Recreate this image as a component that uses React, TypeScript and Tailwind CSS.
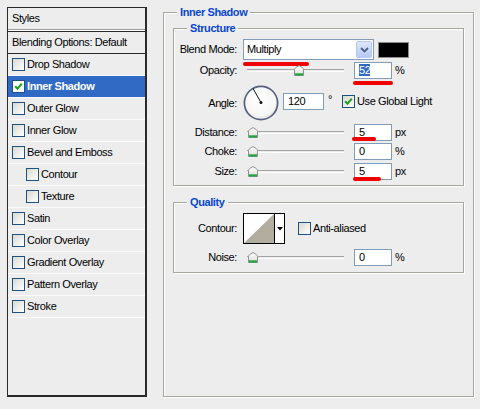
import React from "react";

type Effect = { name: string; sub?: boolean; active?: boolean };

const effects: Effect[] = [
  { name: "Drop Shadow" },
  { name: "Inner Shadow", active: true },
  { name: "Outer Glow" },
  { name: "Inner Glow" },
  { name: "Bevel and Emboss" },
  { name: "Contour", sub: true },
  { name: "Texture", sub: true },
  { name: "Satin" },
  { name: "Color Overlay" },
  { name: "Gradient Overlay" },
  { name: "Pattern Overlay" },
  { name: "Stroke" },
];

const Checkbox = ({ checked = false, white = false }: { checked?: boolean; white?: boolean }) => (
  <span
    className={
      "flex size-[13px] shrink-0 items-center justify-center border border-[#1c5180] " +
      (white ? "bg-white" : "bg-gradient-to-br from-[#d9d9d2] to-white")
    }
  >
    {checked && (
      <svg width="9" height="9" viewBox="0 0 9 9">
        <path d="M1.2 4.2 L3.5 6.7 L7.8 1.6" stroke="#21a121" strokeWidth="2.1" fill="none" />
      </svg>
    )}
  </span>
);

const RedMark = ({ className }: { className: string }) => (
  <span className={"absolute h-[4px] rounded-full bg-[#f00000] " + className} />
);

const Slider = ({ at }: { at: number }) => (
  <div className="relative ml-[10px] flex h-[17px] w-[97px] items-center">
    <div className="h-[3px] w-full border-t border-b border-t-[#a3a3a3] border-b-white" />
    <svg
      className="absolute top-[3px]"
      style={{ left: at }}
      width="10"
      height="11"
      viewBox="0 0 10 11"
    >
      <defs>
        <linearGradient id="thumb" x1="0" y1="0" x2="0" y2="1">
          <stop offset="0" stopColor="#ffffff" />
          <stop offset="1" stopColor="#dcdcd6" />
        </linearGradient>
      </defs>
      <path d="M0.5 4.5 Q0.5 3.5 1.5 2.7 L5 0.5 L8.5 2.7 Q9.5 3.5 9.5 4.5 V10.5 H0.5 Z" fill="url(#thumb)" stroke="#8e9096" />
      <rect x="1" y="8.3" width="8" height="2.2" fill="#21a83a" />
    </svg>
  </div>
);

const Field = ({
  value,
  w = "w-[38px]",
  selected = false,
  children,
}: {
  value: string;
  w?: string;
  selected?: boolean;
  children?: React.ReactNode;
}) => (
  <div className={"relative h-[17px] shrink-0 border border-[#7f9db9] bg-white pl-[4px] leading-[15px] " + w}>
    {selected ? <span className="bg-[#316ac5] text-white">{value}</span> : value}
    {children}
  </div>
);

const Label = ({ children }: { children: React.ReactNode }) => (
  <span className="w-[63px] shrink-0 text-right">{children}</span>
);

const SliderRow = ({
  label,
  at,
  value,
  unit,
  selected,
  mark,
  className,
}: {
  label: string;
  at: number;
  value: string;
  unit: string;
  selected?: boolean;
  mark?: string;
  className: string;
}) => (
  <div className={"flex items-center " + className}>
    <Label>{label}</Label>
    <Slider at={at} />
    <div className="ml-[10px]">
      <Field value={value} selected={selected}>
        {mark && <RedMark className={mark} />}
      </Field>
    </div>
    <span className="ml-[3px]">{unit}</span>
  </div>
);

const legendCls =
  "ml-[13px] bg-[#ededed] px-[3px] text-[11px] font-bold leading-[13px] text-[#0a45cf]";
const boxCls =
  "border border-[#a6a69e] shadow-[1px_1px_0_#ffffff,inset_1px_1px_0_#ffffff]";

export default function App() {
  return (
    <div className="flex h-[409px] w-[480px] items-start bg-[#ededed] font-['Liberation_Sans',Arial,sans-serif] text-[11px] tracking-[-0.4px] text-black">
      {/* styles list */}
      <div className="ml-[7px] mt-[7px] flex h-[390px] w-[140px] flex-col border-t border-l border-r-2 border-b-2 border-[#2a2a2a]">
        <div className="flex h-[22px] shrink-0 items-center border-b border-[#9c9c9c] pl-[4px]">Styles</div>
        <div className="h-px shrink-0 bg-white" />
        <div className="flex h-[23px] shrink-0 items-center border-t border-b border-[#2a2a2a] pl-[4px]">
          Blending Options: Default
        </div>
        {effects.map((e) => (
          <div
            key={e.name}
            className={
              "flex h-[22px] shrink-0 items-center gap-[2px] border-b border-[#fbfbfb] " +
              (e.sub ? "pl-[18px] " : "pl-[4px] ") +
              (e.active ? "bg-[#316ac5] font-bold text-white" : "")
            }
          >
            <Checkbox checked={e.active} white={e.active} />
            <span>{e.name}</span>
          </div>
        ))}
      </div>

      {/* settings */}
      <fieldset className={"ml-[16px] mt-[6px] h-[391px] w-[311px] " + boxCls}>
        <legend className={legendCls}>Inner Shadow</legend>

        <fieldset className={"ml-[9px] mt-[3px] h-[164px] w-[291px] " + boxCls}>
          <legend className={legendCls}>Structure</legend>

          <div className="mt-[4px] flex h-[21px] items-center">
            <Label>Blend Mode:</Label>
            <div className="relative ml-[6px] flex h-[21px] w-[131px] items-center border border-[#7f9db9] bg-white">
              <span className="flex-1 pl-[3px]">Multiply</span>
              <span className="m-px flex h-[17px] w-[16px] items-center justify-center rounded-[2px] border border-[#b6c9f2] bg-gradient-to-b from-[#dde7fd] to-[#b7cbf6]">
                <svg width="9" height="6" viewBox="0 0 9 6">
                  <path d="M1 1 L4.5 4.5 L8 1" stroke="#4d6185" strokeWidth="1.8" fill="none" />
                </svg>
              </span>
              <RedMark className="left-[-1px] top-[22px] w-[66px]" />
            </div>
            <span className="ml-[4px] h-[16px] w-[31px] border border-[#8c8c8c] bg-black" />
          </div>

          <SliderRow
            className="mt-[2px] h-[17px]"
            label="Opacity:"
            at={47}
            value="52"
            unit="%"
            selected
            mark="left-[-2px] top-[18px] w-[40px]"
          />

          <div className="mt-[6px] flex h-[36px] items-center">
            <Label>Angle:</Label>
            <svg className="ml-[6px] shrink-0" width="36" height="36" viewBox="0 0 36 36">
              <defs>
                <radialGradient id="dial" cx="0.45" cy="0.4" r="0.65">
                  <stop offset="0" stopColor="#ffffff" />
                  <stop offset="0.75" stopColor="#f6f6f6" />
                  <stop offset="1" stopColor="#dcdcdc" />
                </radialGradient>
              </defs>
              <circle cx="18" cy="18" r="16.6" fill="url(#dial)" stroke="#53607e" strokeWidth="1.7" />
              <line x1="18" y1="17.5" x2="10" y2="3.5" stroke="#111" strokeWidth="1" />
              <circle cx="18" cy="17.5" r="1.5" fill="#111" />
            </svg>
            <div className="ml-[4px] -mt-[3px]">
              <Field value="120" w="w-[41px]" />
            </div>
            <span className="ml-[4px] -mt-[8px]">°</span>
            <span className="ml-[10px] -mt-[3px] flex items-center gap-[2px]">
              <Checkbox checked />
              <span>Use Global Light</span>
            </span>
          </div>

          <SliderRow
            className="mt-[3px] h-[17px]"
            label="Distance:"
            at={1}
            value="5"
            unit="px"
            mark="left-[-3px] top-[12px] w-[24px]"
          />
          <SliderRow className="mt-[2px] h-[17px]" label="Choke:" at={1} value="0" unit="%" />
          <SliderRow
            className="mt-[3px] h-[17px]"
            label="Size:"
            at={1}
            value="5"
            unit="px"
            mark="left-[-2px] top-[13px] w-[28px]"
          />
        </fieldset>

        <fieldset className={"ml-[9px] mt-[10px] h-[77px] w-[291px] " + boxCls}>
          <legend className={legendCls}>Quality</legend>

          <div className="mt-[4px] flex h-[31px] items-center">
            <Label>Contour:</Label>
            <div className="ml-[6px] flex h-[31px] w-[42px] border border-black bg-white">
              <svg width="30" height="29" viewBox="0 0 30 29" className="shrink-0">
                <path d="M0 29 L30 0 L30 29 Z" fill="#b3ada0" />
              </svg>
              <div className="flex flex-1 items-center justify-center border-l border-black">
                <svg width="6" height="4" viewBox="0 0 6 4">
                  <path d="M0 0 H6 L3 3.5 Z" fill="#000" />
                </svg>
              </div>
            </div>
            <span className="ml-[13px] flex items-center gap-[2px]">
              <Checkbox />
              <span>Anti-aliased</span>
            </span>
          </div>

          <div className="mt-[5px] flex h-[16px] items-center">
            <Label>Noise:</Label>
            <Slider at={1} />
            <div className="ml-[10px]">
              <Field value="0" />
            </div>
            <span className="ml-[3px]">%</span>
          </div>
        </fieldset>
      </fieldset>
    </div>
  );
}
